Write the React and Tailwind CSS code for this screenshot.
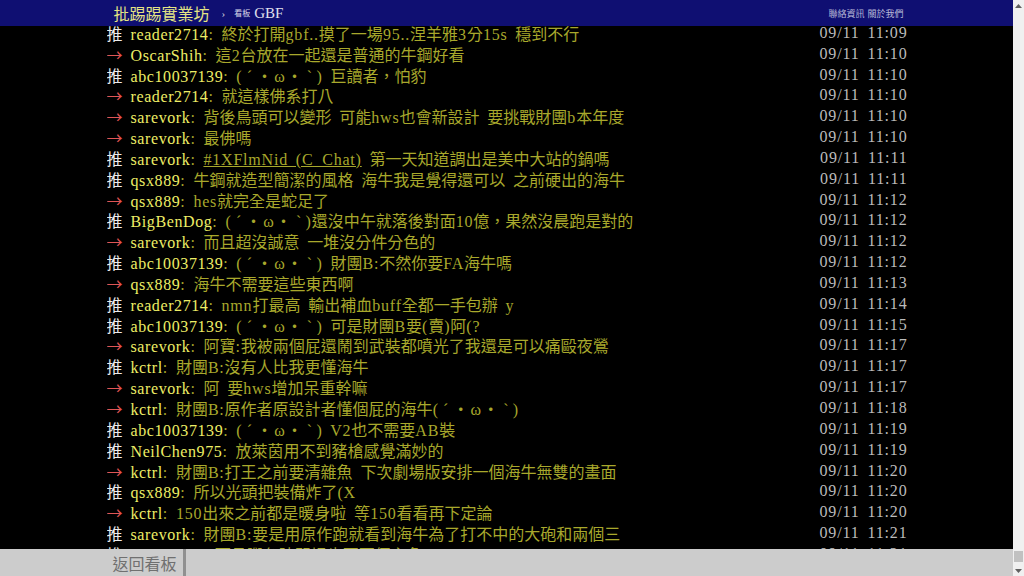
import React from "react";

const rows = [
  { tag: "推", user: "reader2714", content: "終於打開gbf..摸了一場95..涅羊雅3分15s 穩到不行", time: "09/11 11:09" },
  { tag: "→", user: "OscarShih", content: "這2台放在一起還是普通的牛鋼好看", time: "09/11 11:10" },
  { tag: "推", user: "abc10037139", content: "(´・ω・`) 巨讀者，怕豹", time: "09/11 11:10" },
  { tag: "→", user: "reader2714", content: "就這樣佛系打八", time: "09/11 11:10" },
  { tag: "→", user: "sarevork", content: "背後鳥頭可以變形 可能hws也會新設計 要挑戰財團b本年度", time: "09/11 11:10" },
  { tag: "→", user: "sarevork", content: "最佛嗎", time: "09/11 11:10" },
  { tag: "推", user: "sarevork", link: "#1XFlmNid (C_Chat)", content: " 第一天知道調出是美中大站的鍋嗎", time: "09/11 11:11" },
  { tag: "推", user: "qsx889", content: "牛鋼就造型簡潔的風格 海牛我是覺得還可以 之前硬出的海牛", time: "09/11 11:11" },
  { tag: "→", user: "qsx889", content: "hes就完全是蛇足了", time: "09/11 11:12" },
  { tag: "推", user: "BigBenDog", content: "(´・ω・`)還沒中午就落後對面10億，果然沒晨跑是對的", time: "09/11 11:12" },
  { tag: "→", user: "sarevork", content: "而且超沒誠意 一堆沒分件分色的", time: "09/11 11:12" },
  { tag: "推", user: "abc10037139", content: "(´・ω・`) 財團B:不然你要FA海牛嗎", time: "09/11 11:12" },
  { tag: "→", user: "qsx889", content: "海牛不需要這些東西啊", time: "09/11 11:13" },
  { tag: "推", user: "reader2714", content: "nmn打最高 輸出補血buff全都一手包辦 y", time: "09/11 11:14" },
  { tag: "推", user: "abc10037139", content: "(´・ω・`) 可是財團B要(賣)阿(?", time: "09/11 11:15" },
  { tag: "→", user: "sarevork", content: "阿寶:我被兩個屁還鬧到武裝都噴光了我還是可以痛毆夜鶯", time: "09/11 11:17" },
  { tag: "推", user: "kctrl", content: "財團B:沒有人比我更懂海牛", time: "09/11 11:17" },
  { tag: "→", user: "sarevork", content: "阿 要hws增加呆重幹嘛", time: "09/11 11:17" },
  { tag: "→", user: "kctrl", content: "財團B:原作者原設計者懂個屁的海牛(´・ω・`)", time: "09/11 11:18" },
  { tag: "推", user: "abc10037139", content: "(´・ω・`) V2也不需要AB裝", time: "09/11 11:19" },
  { tag: "推", user: "NeilChen975", content: "放萊茵用不到豬槍感覺滿妙的", time: "09/11 11:19" },
  { tag: "→", user: "kctrl", content: "財團B:打王之前要清雜魚 下次劇場版安排一個海牛無雙的畫面", time: "09/11 11:20" },
  { tag: "推", user: "qsx889", content: "所以光頭把裝備炸了(X", time: "09/11 11:20" },
  { tag: "→", user: "kctrl", content: "150出來之前都是暖身啦 等150看看再下定論", time: "09/11 11:20" },
  { tag: "推", user: "sarevork", content: "財團B:要是用原作跑就看到海牛為了打不中的大砲和兩個三", time: "09/11 11:21" },
  { tag: "推", user: "kerry5556", content: "而且腳色陣開場也要兩個主角(´・ω・`)", time: "09/11 11:21" },
];

function Txt({ s }) {
  const parts = s.match(/[\x20-\x5f\x61-\x7e]+|[´`ω]|[^\x20-\x7e´ω]+/g) || [];
  return parts.map((p, i) => {
    if (/^[´`ω]$/.test(p)) {
      return (
        <span key={i} className="inline-block w-[14px] text-center">
          {p}
        </span>
      );
    }
    if (/^[\x20-\x7e]+$/.test(p)) {
      return (
        <span key={i} className="tracking-[0.8px] [word-spacing:3px]">
          {p}
        </span>
      );
    }
    return <span key={i}>{p}</span>;
  });
}

function Row({ r }) {
  return (
    <div className="flex h-[20.85px] leading-[20.85px] whitespace-nowrap text-[16px]">
      <div className="flex-1 overflow-hidden">
        <span
          className={
            "inline-block w-[24px] font-['Noto_Sans_CJK_TC',sans-serif] " +
            (r.tag === "推" ? "text-[#ececec]" : "text-[#e05555]")
          }
        >
          {r.tag}
        </span>
        <span className="text-[#eeee66] tracking-[0.6px]">{r.user}</span>
        <span className="text-[#a8a82c]">
          <Txt s=": " />
          {r.link ? (
            <span className="underline">
              <Txt s={r.link} />
            </span>
          ) : null}
          <Txt s={r.content} />
        </span>
      </div>
      <div className="shrink-0 text-[#bbbbbb] pl-2 tracking-[0.85px] [word-spacing:3px] -mr-[1px]">{r.time}</div>
    </div>
  );
}

export default function App() {
  return (
    <div className="w-[1024px] h-[576px] flex overflow-hidden bg-black font-['Liberation_Serif','Noto_Sans_CJK_TC',serif]">
      <div className="flex-1 flex flex-col min-w-0">
        {/* top bar */}
        <div className="h-[26px] shrink-0 bg-[#0f0f72] relative z-10">
          <div className="w-[800px] mx-auto h-full flex items-center">
            <span className="pl-[7px] text-[16px] leading-none text-[#e4e484] font-['Noto_Sans_CJK_TC',sans-serif]">
              批踢踢實業坊
            </span>
            <span className="ml-[12px] text-[11px] text-[#c8c8d8] leading-none">›</span>
            <span className="ml-[9px] text-[8px] text-[#d8d8e8] leading-none font-['Noto_Sans_CJK_TC',sans-serif]">
              看板
            </span>
            <span className="ml-[4px] text-[15px] text-[#e0e0ee] leading-none">GBF</span>
            <div className="ml-auto flex gap-[3px] pr-[3px] text-[9px] text-[#b8b8d8] leading-none font-['Noto_Sans_CJK_TC',sans-serif]">
              <span>聯絡資訊</span>
              <span>關於我們</span>
            </div>
          </div>
        </div>
        {/* content */}
        <div className="flex-1 overflow-hidden">
          <div className="w-[800px] mx-auto -mt-[3.2px]">
            {rows.map((r, i) => (
              <Row key={i} r={r} />
            ))}
          </div>
        </div>
        {/* bottom bar */}
        <div className="h-[27px] shrink-0 bg-[#cccccc] relative z-10">
          <div className="w-[800px] mx-auto h-full flex">
            <div className="h-full flex items-center pl-[6px] pr-[6px] border-r-[3px] border-[#909090] text-[16px] text-[#707070] font-['Noto_Sans_CJK_TC',sans-serif]">
              返回看板
            </div>
          </div>
        </div>
      </div>
      {/* scrollbar */}
      <div className="w-[11px] shrink-0 bg-[#f0f0f0] flex flex-col items-center">
        <div className="h-[11px] flex items-center justify-center">
          <svg width="7" height="4" viewBox="0 0 7 4">
            <polygon points="3.5,0 7,4 0,4" fill="#606060" />
          </svg>
        </div>
        <div className="flex-1 w-full flex flex-col justify-end items-center pb-[3px]">
          <div className="w-[9px] h-[11px] bg-[#c1c1c1]" />
        </div>
        <div className="h-[11px] flex items-center justify-center">
          <svg width="7" height="4" viewBox="0 0 7 4">
            <polygon points="0,0 7,0 3.5,4" fill="#606060" />
          </svg>
        </div>
      </div>
    </div>
  );
}
